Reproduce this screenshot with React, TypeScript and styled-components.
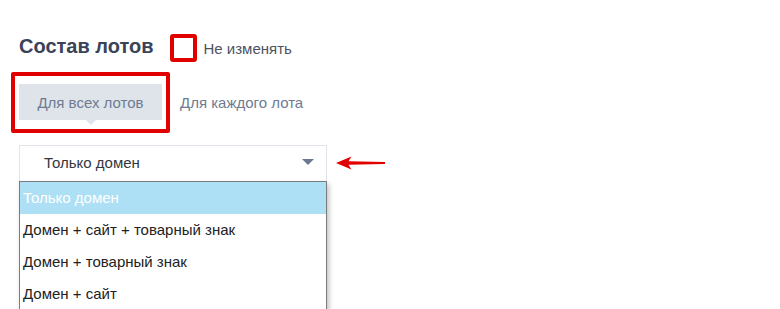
import React from 'react';
import styled, { createGlobalStyle } from 'styled-components';

const GlobalStyle = createGlobalStyle`
  html, body {
    margin: 0;
    padding: 0;
    background: #ffffff;
    font-family: "Liberation Sans", Arial, sans-serif;
  }
`;

const Page = styled.div`
  display: flex;
  flex-direction: column;
  align-items: flex-start;
  padding: 34px 0 0 19px;
  width: 780px;
  height: 309px;
  box-sizing: border-box;
  overflow: hidden;
`;

const HeaderRow = styled.div`
  display: flex;
  align-items: center;
  height: 28px;
`;

const Title = styled.h3`
  margin: -3px 16px 0 0;
  font-size: 20px;
  font-weight: 700;
  color: #3a4357;
`;

const CheckLabel = styled.label`
  display: flex;
  align-items: center;
  gap: 7px;
  font-size: 15px;
  color: #4d5262;
`;

const CheckBox = styled.span`
  display: block;
  width: 27px;
  height: 28px;
  box-sizing: border-box;
  border: 4px solid #e00000;
  border-radius: 3px;
  background: #fff;
`;

const TabsRow = styled.div`
  display: flex;
  align-items: center;
  margin: 10px 0 0 -8px;
`;

const Highlight = styled.div`
  border: 4px solid #e00000;
  border-radius: 2px;
  padding: 8px 4px 9px 4px;
`;

const Tab = styled.div<{ $active?: boolean }>`
  position: relative;
  display: flex;
  align-items: center;
  justify-content: center;
  height: 36px;
  padding: ${p => (p.$active ? '0 18px' : '0')};
  width: ${p => (p.$active ? '143px' : 'auto')};
  box-sizing: border-box;
  background: ${p => (p.$active ? '#dfe3ea' : 'transparent')};
  color: #6e7b91;
  font-size: 15px;
  margin-left: ${p => (p.$active ? '0' : '10px')};

  ${p =>
    p.$active &&
    `
    &::after {
      content: '';
      position: absolute;
      left: 50%;
      bottom: -5px;
      margin-left: -5px;
      border-left: 5px solid transparent;
      border-right: 5px solid transparent;
      border-top: 5px solid #dfe3ea;
    }
  `}
`;

const SelectRow = styled.div`
  display: flex;
  align-items: flex-start;
  margin-top: 12px;
`;

const SelectWrap = styled.div`
  width: 308px;
`;

const SelectBox = styled.div`
  display: flex;
  align-items: center;
  justify-content: space-between;
  height: 36px;
  box-sizing: border-box;
  padding: 0 12px 3px 24px;
  border: 1px solid #e1e4ea;
  border-bottom: none;
  font-size: 15px;
  color: #333740;
`;

const Caret = styled.span`
  width: 0;
  height: 0;
  border-left: 6px solid transparent;
  border-right: 6px solid transparent;
  border-top: 6px solid #6c7890;
`;

const ArrowMark = styled.svg`
  margin: 11px 0 0 8px;
`;

const List = styled.ul`
  list-style: none;
  margin: 0;
  padding: 0;
  border: 1px solid #7c7c7c;
  box-shadow: 2px 3px 5px rgba(0, 0, 0, 0.25);
  background: #fff;
`;

const Option = styled.li<{ $selected?: boolean }>`
  height: 32px;
  display: flex;
  align-items: center;
  padding: 0 0 2px 3px;
  box-sizing: border-box;
  font-size: 15px;
  color: ${p => (p.$selected ? '#ffffff' : '#222222')};
  background: ${p => (p.$selected ? '#ade0f4' : '#ffffff')};
`;

const options = [
  'Только домен',
  'Домен + сайт + товарный знак',
  'Домен + товарный знак',
  'Домен + сайт',
];

export default function App() {
  return (
    <Page>
      <GlobalStyle />
      <HeaderRow>
        <Title>Состав лотов</Title>
        <CheckLabel>
          <CheckBox />
          Не изменять
        </CheckLabel>
      </HeaderRow>

      <TabsRow>
        <Highlight>
          <Tab $active>Для всех лотов</Tab>
        </Highlight>
        <Tab>Для каждого лота</Tab>
      </TabsRow>

      <SelectRow>
        <SelectWrap>
          <SelectBox>
            Только домен
            <Caret />
          </SelectBox>
          <List>
            {options.map((o, i) => (
              <Option key={o} $selected={i === 0}>
                {o}
              </Option>
            ))}
          </List>
        </SelectWrap>
        <ArrowMark width="52" height="14" viewBox="0 0 52 14">
          <path
            d="M1 7 L16.5 0.5 L13.5 5.2 L50 5.9 L50 8.1 L13.5 8.8 L16.5 13.5 Z"
            fill="#e00000"
          />
        </ArrowMark>
      </SelectRow>
    </Page>
  );
}
